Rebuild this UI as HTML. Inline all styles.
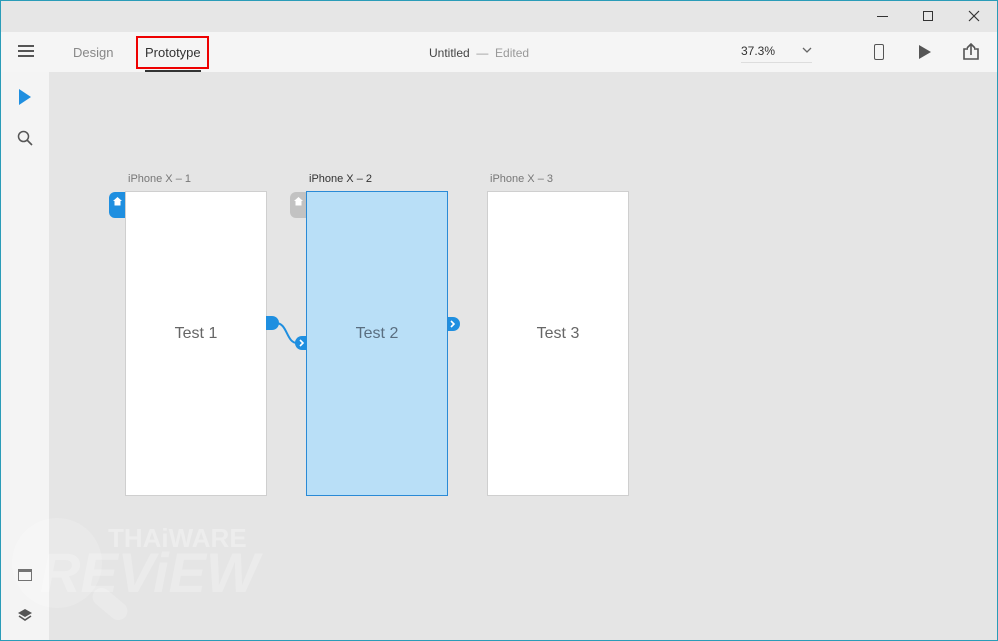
<!DOCTYPE html>
<html><head><meta charset="utf-8"><style>
*{margin:0;padding:0;box-sizing:border-box}
body{width:998px;height:641px;overflow:hidden;font-family:"Liberation Sans",sans-serif;background:#e5e5e5;position:relative}
.win{position:absolute;inset:0;border:1px solid #2a9cb8}
.title{position:absolute;left:1px;right:1px;top:1px;height:31px;background:#e6e6e6}
.tool{position:absolute;left:1px;right:1px;top:32px;height:40px;background:#f5f5f5}
.side{position:absolute;left:1px;top:72px;width:48px;bottom:1px;background:#f4f4f4}
.t{position:absolute;font-size:13px;color:#444;white-space:nowrap}
.ab{position:absolute;top:191px;width:142px;height:305px;background:#fff;border:1px solid #cfcfcf}
.ab span{position:absolute;left:0;right:0;top:133px;text-align:center;font-size:16px;color:#666}
.lbl{position:absolute;top:173px;font-size:11px;color:#777}
</style></head><body>
<div class="title"></div>
<div class="tool"></div>
<div class="side"></div>
<div style="position:absolute;left:877px;top:16px;width:11px;height:1px;background:#333"></div>
<div style="position:absolute;left:923px;top:11px;width:10px;height:10px;border:1px solid #333"></div>
<svg style="position:absolute;left:968px;top:10px" width="12" height="12"><path d="M1 1L11 11M11 1L1 11" stroke="#333" stroke-width="1.2"/></svg>
<div style="position:absolute;left:18px;top:45px;width:16px;height:2px;background:#555;box-shadow:0 5px 0 #555,0 10px 0 #555"></div>
<div class="t" style="left:73px;top:45px;color:#888">Design</div>
<div style="position:absolute;left:136px;top:36px;width:73px;height:33px;border:2px solid #e00"></div>
<div class="t" style="left:145px;top:45px;color:#333">Prototype</div>
<div style="position:absolute;left:145px;top:70px;width:56px;height:2px;background:#333"></div>
<div class="t" style="left:429px;top:46px;font-size:12px;color:#444">Untitled <span style="color:#999">&nbsp;—&nbsp; Edited</span></div>
<div class="t" style="left:741px;top:44px;font-size:12px;color:#333">37.3%</div>
<div style="position:absolute;left:741px;top:62px;width:71px;height:1px;background:#ddd"></div>
<svg style="position:absolute;left:802px;top:47px" width="10" height="7"><path d="M1 1L5 5L9 1" stroke="#666" fill="none" stroke-width="1.3"/></svg>
<div style="position:absolute;left:874px;top:44px;width:10px;height:16px;border:1.5px solid #555;border-radius:2px"></div>
<svg style="position:absolute;left:918px;top:45px" width="14" height="14"><path d="M1 0L13 7L1 14Z" fill="#555"/></svg>
<svg style="position:absolute;left:962px;top:43px" width="18" height="18"><path d="M6 6H2V16H16V6H12M9 12V1M5 5L9 1L13 5" stroke="#555" fill="none" stroke-width="1.6"/></svg>
<svg style="position:absolute;left:19px;top:89px" width="12" height="16"><path d="M0 0L12 8L0 16Z" fill="#1f8fe0"/></svg>
<svg style="position:absolute;left:17px;top:130px" width="16" height="16"><circle cx="6.5" cy="6.5" r="5" stroke="#555" stroke-width="1.5" fill="none"/><path d="M10 10L15 15" stroke="#555" stroke-width="1.6"/></svg>
<div style="position:absolute;left:18px;top:569px;width:14px;height:12px;border:1.3px solid #555;border-top-width:3px"></div>
<svg style="position:absolute;left:17px;top:608px" width="16" height="15"><path d="M8 1L15 5L8 9L1 5Z" fill="#555"/><path d="M2 8L8 12L14 8" stroke="#555" fill="none" stroke-width="1.6"/></svg>
<div style="position:absolute;left:12px;top:518px;width:90px;height:90px;border-radius:50%;background:rgba(255,255,255,.18)"></div>
<div style="position:absolute;left:90px;top:595px;width:40px;height:18px;border-radius:9px;background:rgba(255,255,255,.2);transform:rotate(40deg)"></div>
<div class="t" style="left:108px;top:523px;font-size:26px;color:rgba(255,255,255,.3);font-weight:bold">THAiWARE</div>
<div class="t" style="left:40px;top:540px;font-size:56px;color:rgba(255,255,255,.25);font-weight:bold;font-style:italic">REViEW</div>
<div class="lbl" style="left:128px">iPhone X – 1</div>
<div class="lbl" style="left:309px;color:#333">iPhone X – 2</div>
<div class="lbl" style="left:490px">iPhone X – 3</div>
<div class="ab" style="left:125px"><span>Test 1</span></div>
<div class="ab" style="left:306px;background:#b9dff7;border-color:#2a8ad6"><span style="color:#5a6e80">Test 2</span></div>
<div class="ab" style="left:487px"><span>Test 3</span></div>
<div style="position:absolute;left:109px;top:192px;width:16px;height:26px;background:#1f8fe0;border-radius:6px 0 0 6px"></div>
<svg style="position:absolute;left:113px;top:197px" width="9" height="9"><path d="M4.5 0L9 4H7.5V8.5H1.5V4H0Z" fill="#fff"/></svg>
<div style="position:absolute;left:290px;top:192px;width:16px;height:26px;background:#c2c2c2;border-radius:6px 0 0 6px"></div>
<svg style="position:absolute;left:294px;top:197px" width="9" height="9"><path d="M4.5 0L9 4H7.5V8.5H1.5V4H0Z" fill="#fff"/></svg>
<svg style="position:absolute;left:266px;top:314px" width="50" height="40"><path d="M0 2H6A6 6 0 0 1 6 16H0Z" fill="#1f8fe0"/><path d="M10 9C22 9 20 30 32 29" stroke="#1f8fe0" stroke-width="2" fill="none"/><path d="M41 22H36A7 7 0 0 0 36 36H41Z" fill="#1f8fe0"/><path d="M34 26L37 29L34 32" stroke="#fff" stroke-width="1.6" fill="none"/></svg>
<svg style="position:absolute;left:448px;top:316px" width="14" height="16"><path d="M0 1H5A7 7 0 0 1 5 15H0Z" fill="#1f8fe0"/><path d="M3 5L6 8L3 11" stroke="#fff" stroke-width="1.6" fill="none"/></svg>
<div class="win"></div>
</body></html>
